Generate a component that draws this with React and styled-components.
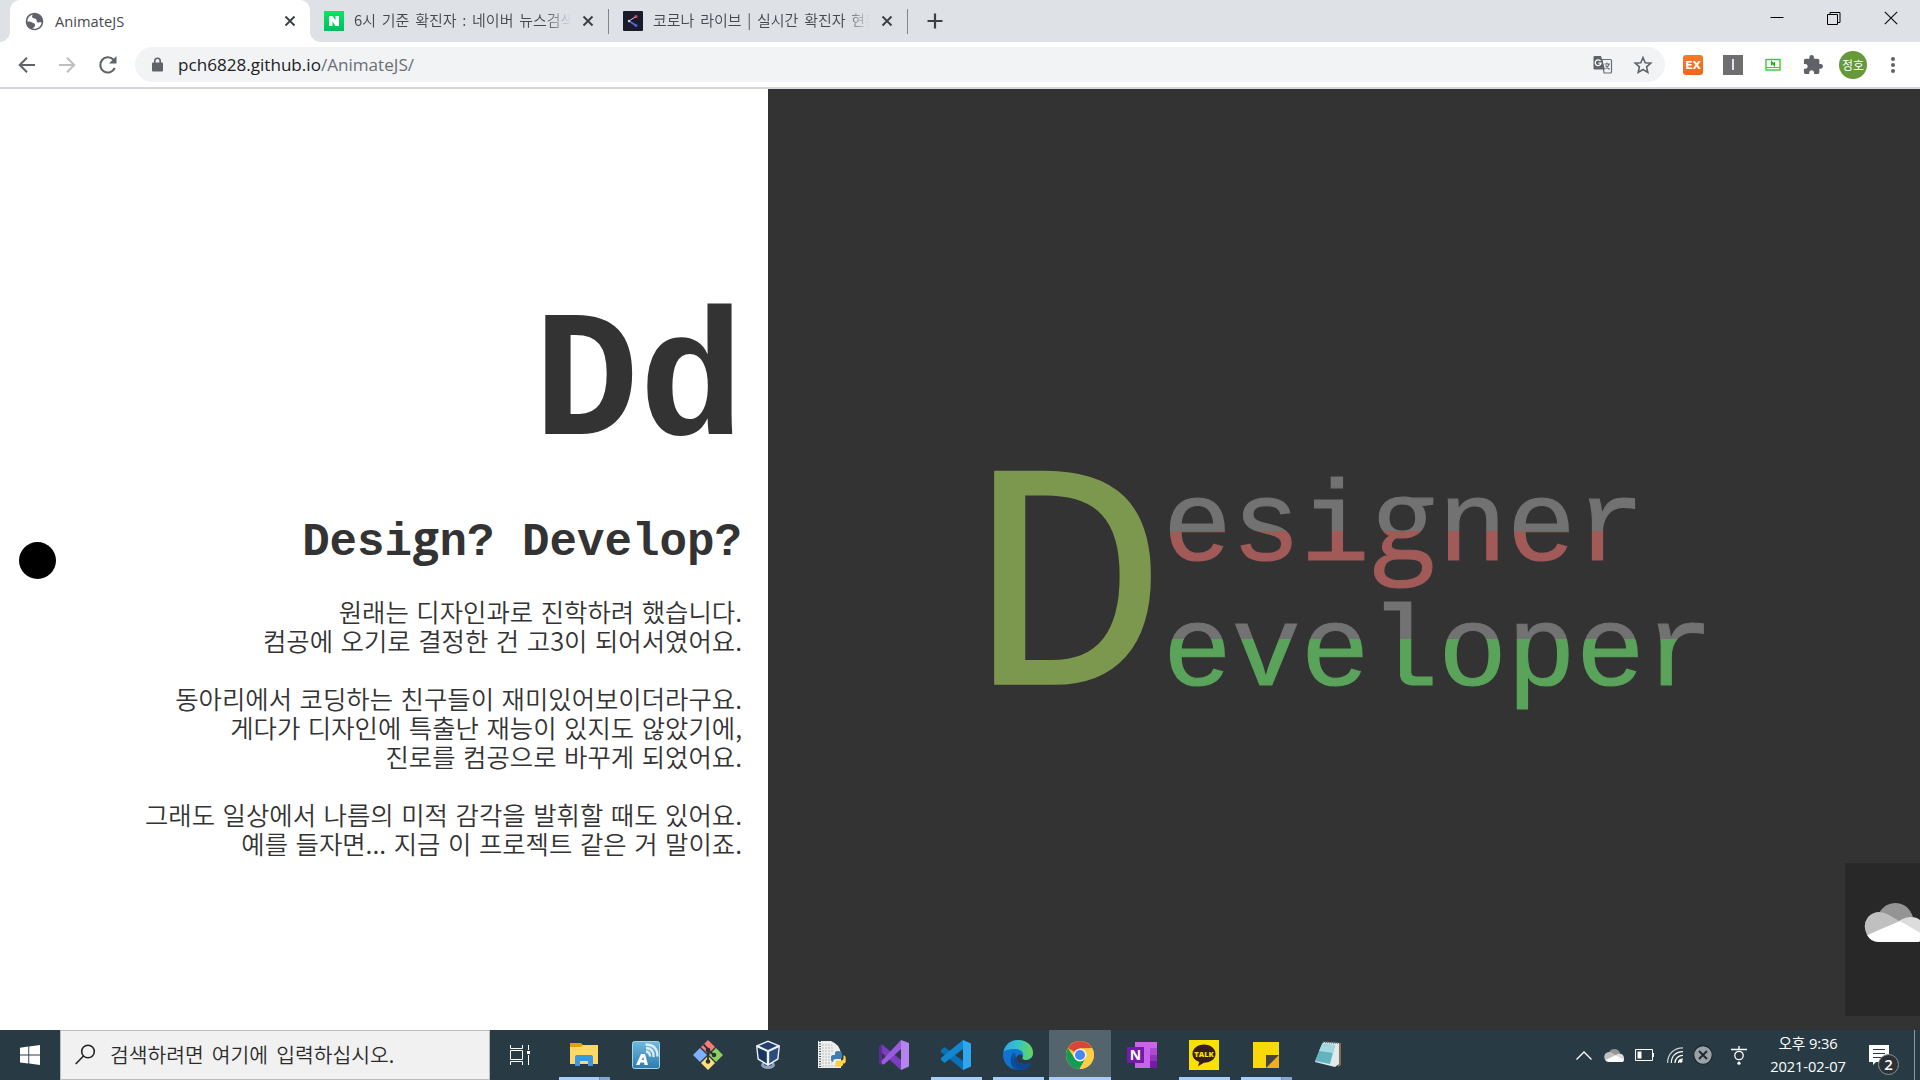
import React from "react";
import styled, { createGlobalStyle } from "styled-components";

const UI = `"Open Sans", "Noto Sans CJK KR", sans-serif`;
const KR = `"Noto Sans CJK KR", sans-serif`;
const MONO = `"Liberation Mono", "Noto Sans CJK KR", monospace`;

const Global = createGlobalStyle`
  * { box-sizing: border-box; }
  body { margin: 0; background: #fff; font-family: ${UI}; overflow: hidden; }
  svg { display: block; flex: none; }
`;

const Screen = styled.div`
  width: 1920px;
  height: 1080px;
  display: flex;
  flex-direction: column;
  overflow: hidden;
`;

/* ---------- browser frame ---------- */
const TabStrip = styled.div`
  height: 42px;
  flex: none;
  display: flex;
  background: #dee1e6;
  padding-left: 10px;
`;
const Tab = styled.div`
  position: relative;
  display: flex;
  align-items: center;
  width: ${(p) => p.$w}px;
  padding: 0 12px 0 14px;
  background: ${(p) => (p.$active ? "#fff" : "transparent")};
  border-radius: 10px 10px 0 0;
  &::before, &::after {
    content: "";
    display: ${(p) => (p.$active ? "block" : "none")};
    position: absolute;
    bottom: 0;
    width: 10px;
    height: 10px;
  }
  &::before { left: -10px; background: radial-gradient(circle at 0 0, transparent 9.5px, #fff 10px); }
  &::after { right: -10px; background: radial-gradient(circle at 100% 0, transparent 9.5px, #fff 10px); }
`;
const TabTitle = styled.div`
  flex: 1;
  margin: 0 ${(p) => (p.$kr ? 7 : 10)}px 0 10px;
  padding-bottom: ${(p) => (p.$kr ? 2 : 1)}px;
  font-family: ${(p) => (p.$kr ? KR : UI)};
  font-weight: ${(p) => (p.$kr ? 350 : 400)};
  font-size: ${(p) => (p.$kr ? 15 : 14.7)}px;
  word-spacing: ${(p) => (p.$kr ? 2.4 : 0)}px;
  line-height: 20px;
  color: #45494d;
  white-space: nowrap;
  overflow: hidden;
  mask-image: ${(p) => (p.$kr ? "linear-gradient(90deg, #000 calc(100% - 28px), transparent calc(100% - 2px))" : "none")};
`;
const Divider = styled.div`
  width: 1px;
  height: 25px;
  margin-top: 9px;
  background: #80858a;
`;
const NewTab = styled.div`
  display: flex;
  align-items: center;
  padding-left: 19px;
  flex: 1;
`;
const WindowButtons = styled.div`
  display: flex;
  gap: 43px;
  padding: 11px 22px 0 0;
`;
const NaverIcon = styled.div`
  width: 20px;
  height: 20px;
  display: grid;
  place-items: center;
  background: linear-gradient(#04e765, #04bd5c);
`;
const LiveIcon = styled.div`
  width: 20px;
  height: 20px;
  background: #191b2b;
  border-radius: 1px;
`;
const Toolbar = styled.div`
  height: 47px;
  flex: none;
  display: flex;
  align-items: center;
  padding: 0 17px 0 17px;
  border-bottom: 2px solid #d5d7dc;
  background: #fff;
`;
const NavButtons = styled.div`
  display: flex;
  flex: none;
  gap: 20px;
  width: 118px;
`;
const Omnibox = styled.div`
  width: 1530px;
  flex: none;
  height: 35px;
  display: flex;
  align-items: center;
  padding: 0 12px 0 15px;
  border-radius: 18px;
  background: #f1f3f4;
`;
const Url = styled.div`
  flex: 1;
  padding-left: 13px;
  font-size: 17.1px;
  color: #6b6f74;
  b { font-weight: 400; color: #202124; }
`;
const StarSlot = styled.div`
  margin-left: 20px;
`;
const Extensions = styled.div`
  flex: 1;
  display: flex;
  align-items: center;
  padding-left: 18px;
  gap: 20px;
`;
const ExBadge = styled.div`
  width: 20px;
  height: 20px;
  border-radius: 3px;
  background: linear-gradient(#f07c28, #f4641c);
  color: #fff;
  font: 700 11px/21px "DejaVu Sans", sans-serif;
  text-align: center;
  letter-spacing: -0.3px;
`;
const GreyBadge = styled.div`
  width: 20px;
  height: 20px;
  display: grid;
  place-items: center;
  background: #6e6e6e;
  &::after { content: ""; width: 2px; height: 11px; background: #dfe3f3; }
`;
const Avatar = styled.div`
  width: 28px;
  height: 28px;
  flex: none;
  margin: 0 -4px;
  border-radius: 50%;
  background: #65993a;
  color: #fff;
  font: 400 12px/27px ${KR};
  text-align: center;
`;

/* ---------- page ---------- */
const Page = styled.main`
  flex: 1;
  display: flex;
  position: relative;
  background: #333;
`;
const Intro = styled.section`
  width: 768px;
  display: flex;
  flex-direction: column;
  align-items: flex-end;
  padding: 200px 26px 0 0;
  background: #fff;
  color: #333;
`;
const Ball = styled.div`
  position: absolute;
  left: 19px;
  top: 453px;
  width: 37px;
  height: 37px;
  border-radius: 50%;
  background: #000;
`;
const Monogram = styled.h1`
  margin: 0 -2px 0 0;
  font: 700 171px/200px ${MONO};
  transform: scale(1.025, 1.05);
  transform-origin: 100% 145px;
`;
const Heading = styled.h2`
  margin: 24px 0 0;
  font: 700 45.82px/60px ${MONO};
  white-space: pre;
`;
const Swash = styled.span`
  display: inline-block;
  width: 0.6em;
  line-height: 0.8;
  text-align: center;
  font-family: "Open Sans", sans-serif;
`;
const Story = styled.p`
  margin: 24px 0 0;
  font: 350 25.4px/29px ${KR};
  word-spacing: 1.9px;
  text-align: right;
  white-space: pre;
`;
const Hero = styled.section`
  flex: 1;
  display: flex;
  align-items: flex-start;
  padding: 352px 0 0 200px;
`;
const BigD = styled.div`
  width: 195px;
  margin-top: 16px;
  font: 400 330px/280px ${MONO};
  color: #7c984f;
  transform: scale(1.01, 0.985);
  transform-origin: 20px 219px;
`;
const Words = styled.div`
  display: flex;
  flex-direction: column;
  margin-top: 26px;
`;
const Word = styled.div`
  height: 125.4px;
  font: 400 114.7px/125.4px ${MONO};
  color: transparent;
  -webkit-text-stroke: 1.2px transparent;
  background: linear-gradient(#727272 ${(p) => p.$cut}px, ${(p) => p.$c} ${(p) => p.$cut}px);
  background-clip: text;
  -webkit-background-clip: text;
`;
const Popup = styled.aside`
  position: absolute;
  right: 0;
  top: 774px;
  width: 75px;
  height: 153px;
  overflow: hidden;
  padding: 40px 0 0 19px;
  background: #282828;
`;

/* ---------- taskbar ---------- */
const Taskbar = styled.footer`
  height: 50px;
  flex: none;
  display: flex;
  background: #283b45;
`;
const Start = styled.div`
  width: 60px;
  display: grid;
  place-items: center;
`;
const Search = styled.div`
  width: 430px;
  display: flex;
  align-items: center;
  gap: 14px;
  padding: 0 0 2px 14px;
  border: 1px solid #bcbcbc;
  background: #f1f1f1;
  color: #2b2b2b;
  font: 350 20.4px/28px ${KR};
  word-spacing: 3.5px;
`;
const TaskView = styled.div`
  width: 63px;
  display: flex;
  align-items: center;
  padding-left: 20px;
`;
const AppButton = styled.div`
  width: 62px;
  height: 50px;
  display: flex;
  flex-direction: column;
  align-items: center;
  justify-content: space-between;
  padding-top: 10px;
  background: ${(p) => (p.$on ? "#53646c" : "transparent")};
`;
const Running = styled.div`
  width: ${(p) => (p.$full ? 62 : 51)}px;
  height: 3px;
  background: ${(p) => (p.$stack ? "linear-gradient(90deg, #a9cdfb 40px, #5b7797 40px, #86a5cf 41px)" : "#a9cdfb")};
`;
const Tray = styled.div`
  margin-left: auto;
  display: flex;
  align-items: center;
  color: #fff;
`;
const TrayIcon = styled.div`
  width: ${(p) => p.$w}px;
  display: flex;
  justify-content: center;
`;
const Clock = styled.div`
  width: 100px;
  text-align: center;
  font: 400 14.7px/23px ${UI};
  letter-spacing: -0.1px;
`;
const Notice = styled.div`
  position: relative;
  width: 56px;
  height: 50px;
  padding: 15px 0 0 11px;
`;
const Count = styled.div`
  position: absolute;
  left: 20px;
  top: 24px;
  width: 21px;
  height: 21px;
  border: 1px solid #8b9296;
  border-radius: 50%;
  background: #2c3135;
  font: 600 15px/19px ${UI};
  text-align: center;
`;
const Edge = styled.div`
  width: 6px;
  height: 50px;
  border-left: 1px solid #8c989e;
`;

const Close = () => (
  <svg width="16" height="16" viewBox="0 0 16 16">
    <path d="M3.5 3.5l9 9M12.5 3.5l-9 9" stroke="#3c4043" strokeWidth="1.9" />
  </svg>
);

const Globe = () => (
  <svg width="21" height="21" viewBox="0 0 24 24" fill="#5f6368">
    <path d="M12 2C6.48 2 2 6.48 2 12s4.48 10 10 10 10-4.48 10-10S17.52 2 12 2zm0 18.2c-1 0-1.900-.2-2.800-.5 1.900-.6 3.300-1.700 3.500-3.500.1-1.500-.9-2.200-2.300-2.600-1.600-.4-2.600-1.500-4.100-1.500H3.800C3.900 8.300 6.600 5 10.100 4c-1.100 1.500-1.300 3.200.1 4 1.500.8 2.300.2 3.600 1.500 1.200 1.200.1 2.500 1.400 3.300 1.500.9 3-.2 4.900.2-.5 4.100-4 7.200-8.100 7.200z" />
  </svg>
);

const icons = {
  explorer: (
    <svg width="30" height="30" viewBox="0 0 30 30">
      <path d="M1 3h11l2 2v4H1z" fill="#e2a10c" />
      <path d="M1 7h11l2-2h15v19H1z" fill="#ffd667" />
      <path d="M6 26V17q0-2 2-2h14q2 0 2 2v9h-5v-5h-8v5z" fill="#3c97e0" />
    </svg>
  ),
  hotspot: (
    <svg width="30" height="30" viewBox="0 0 30 30">
      <defs><linearGradient id="hs" x2="0" y2="1"><stop stopColor="#6fb9dc" /><stop offset="1" stopColor="#2d7cae" /></linearGradient></defs>
      <rect x="1.500" y="1.500" width="27" height="27" rx="2" fill="url(#hs)" stroke="#a6d5ea" />
      <path d="M5 25l5-11h4l3 11h-3.500l-.5-2.500H9.500L8.500 25zM10.500 20H13l-.7-3z" fill="#fff" fillRule="evenodd" />
      <path d="M15 11.500q4 .5 4 5M15 8q8 .5 7.500 9M14.500 4.500q12 0 12 12" fill="none" stroke="#d9edf6" strokeWidth="2.300" />
    </svg>
  ),
  git: (
    <svg width="30" height="30" viewBox="0 0 30 30">
      <path d="M15 0l7 7-7 7-7-7z" fill="#f77b7b" />
      <path d="M23 8l7 7-7 7-7-7z" fill="#8bd15c" />
      <path d="M7 8l7 7-7 7-7-7z" fill="#7fb0fb" />
      <path d="M15 16l7 7-7 7-7-7z" fill="#ffe07c" />
      <path d="M10.500 4.500L15 9v12M15 10l6 5" fill="none" stroke="#2b3236" strokeWidth="1.800" />
      <circle cx="15" cy="10" r="2.300" fill="#2b3236" /><circle cx="21" cy="15" r="2.300" fill="#2b3236" /><circle cx="15" cy="21.500" r="2.300" fill="#2b3236" />
    </svg>
  ),
  vbox: (
    <svg width="32" height="30" viewBox="1 0 32 30">
      <ellipse cx="15" cy="25" rx="7" ry="4" fill="#8fa1bb" /><ellipse cx="15" cy="24" rx="4" ry="2" fill="#304b78" />
      <path d="M15 .5l12 5-1.500 14L15 26 4.500 19.500 3 5.500z" fill="#eef3f9" />
      <path d="M15 2l9 3.800-9 4.200-9-4.200z" fill="#24416f" />
      <path d="M4.500 7.500l9.300 4.300v11.700l-8-5z" fill="#1c355f" /><path d="M25.500 7.500l-9.300 4.300v11.700l8-5z" fill="#2c4c7d" />
    </svg>
  ),
  python: (
    <svg width="30" height="30" viewBox="0 0 30 30">
      <path d="M1 1h13q8 3 10 12v15H1z" fill="#eeeeec" />
      <path d="M3 1v27" stroke="#4f5759" strokeWidth="2" strokeDasharray="1 1.500" />
      <path d="M5 5h10M5 8h12M5 11h11M5 14h8M5 17h8M5 20h8M5 23h10M5 26h14" stroke="#b9bebe" strokeDasharray="2 1" />
      <path d="M14 17q0-2 2-2h2v-2q0-2 3-2t4 2v4q0 2-2 2h-4q-3 0-3 3-2 0-2-3z" fill="#3e7cb1" />
      <path d="M28.500 17q0-2-2-1.500v2.500q0 2-2 2.500h-4q-2 0-2 2v2q0 2 3 2.500t4.500-2v-1.500h1.500q2-1 1-6.500z" fill="#ffd241" />
    </svg>
  ),
  vs: (
    <svg width="30" height="30" viewBox="0 0 30 30">
      <path d="M0 7l3-2.500L22 20v10L3 13v7l6-5 3 3-9 6.500-3-2z" fill="#7a3dbf" />
      <path d="M0 7l3-1.500v19L0 22z" fill="#5d2b97" />
      <path d="M22 0v9L5 24.500 3 24l-.5-3z" fill="#9a5be0" />
      <path d="M22 0l8 3v23.500L22 30z" fill="#b583ee" />
    </svg>
  ),
  vscode: (
    <svg width="30" height="30" viewBox="0 0 30 30">
      <path d="M0 10l3.500-3L22 21v9L0 12z" fill="#0a70b8" />
      <path d="M0 20l3.500 3L22 9V0L0 18z" fill="#1287cf" />
      <path d="M22 0l8 3.500v23L22 30z" fill="#2fa7ef" />
    </svg>
  ),
  edge: (
    <svg width="30" height="30" viewBox="0 0 30 30">
      <defs><linearGradient id="ed" x1="0" x2="1"><stop stopColor="#2fa6e8" /><stop offset=".5" stopColor="#38c4c4" /><stop offset="1" stopColor="#67d651" /></linearGradient></defs>
      <circle cx="15" cy="15" r="15" fill="#1173cf" />
      <path d="M.5 12C2 4 8 0 15 0c9 0 15 6 15 12.500 0 6-5 8-8.500 7.500-3-.5-2.500-2-1.500-4 1-3-2-7-8-7-6 0-10 1-11.500 3z" fill="url(#ed)" />
      <path d="M12 12c-3 5-1 13 5 15.500 4 1.500 8 0 10.500-3C24 31 16 31 12 29.600 6 26 6 15 12 12z" fill="#0d4f9c" />
      <path d="M13 13c-2 5 2 11 9 11 3 0 5-.8 6-1.300.6 0 .6.600-.2 1.600-2 3-6 5.700-10.800 4.700C10 26.500 9.500 17 13 13z" fill="#0e468f" />
      <path d="M20 16.500c-1 1.500-1.500 3 1.500 3.500 4 .6 7-1 8.200-4 1 3 0 6-1.400 7-6 2.500-14 1-15.300-5 2-4 5-4.500 7-1.500z" fill="#283b45" />
    </svg>
  ),
  chrome: (
    <svg width="30" height="30" viewBox="0 0 30 30">
      <circle cx="15" cy="15" r="14" fill="#fcc934" />
      <path d="M15 15L2.900 8A14 14 0 0 1 27.100 8L15 8.500z" fill="#db4437" />
      <path d="M2.900 8A14 14 0 0 0 14.500 29l6-10.500L15 15 9.500 18.300z" fill="#129a57" />
      <path d="M15 8.500h12.300A14 14 0 0 1 14.500 29l6-10.500z" fill="#ffcd46" />
      <circle cx="15" cy="15" r="6.500" fill="#f4f4f4" /><circle cx="15" cy="15" r="5" fill="#4587f4" />
    </svg>
  ),
  onenote: (
    <svg width="30" height="30" viewBox="0 0 30 30">
      <path d="M8 2h22v26H8z" fill="#ca64ea" /><path d="M23 8h7v7h-7z" fill="#ae4bd5" /><path d="M23 15h7v6h-7z" fill="#9332bf" /><path d="M23 21h7v7h-7z" fill="#7719aa" />
      <path d="M8 2h15v26H8z" fill="#c765ea" /><path d="M0 7h17v16H0z" fill="#7719aa" />
      <text x="8.500" y="20" textAnchor="middle" fontFamily="Open Sans" fontWeight="700" fontSize="14" fill="#fff">N</text>
    </svg>
  ),
  talk: (
    <svg width="30" height="30" viewBox="0 0 30 30">
      <path d="M0 0h30v30H0z" fill="#fae100" />
      <path d="M15 4.500c6.500 0 11.500 4 11.500 9.200s-5 9-11.500 9l-6 3.500 1.300-4.300C6 20.500 3.500 17.500 3.500 13.700c0-5.200 5-9.200 11.500-9.200z" fill="#371d1e" />
      <text x="15" y="16.600" textAnchor="middle" fontFamily="Open Sans" fontWeight="800" fontSize="7.500" fill="#fae100">TALK</text>
    </svg>
  ),
  sticky: (
    <svg width="30" height="30" viewBox="0 0 30 30">
      <path d="M2 2h26v26H2z" fill="#fbd80a" /><path d="M28 15v13H15z" fill="#f0ae18" /><path d="M15 15h13L15 28z" fill="#45423f" />
    </svg>
  ),
  notepad: (
    <svg width="30" height="30" viewBox="0 0 30 30">
      <path d="M25 3h3v22l-3 2z" fill="#8a6e4b" /><path d="M10 2l16 1v21l-4 3-20-5z" fill="#dfeaec" />
      <path d="M9 4l13 1-5 19-15-3z" fill="#64b3c0" /><path d="M9 4l13 1-2 8-14-2z" fill="#a3d9df" />
      <path d="M10 2l15 1" stroke="#667" strokeWidth="2" strokeDasharray="1 1" />
    </svg>
  ),
};

const apps = [
  { id: "explorer", run: true, stack: true },
  { id: "hotspot" },
  { id: "git" },
  { id: "vbox" },
  { id: "python" },
  { id: "vs" },
  { id: "vscode", run: true },
  { id: "edge", run: true },
  { id: "chrome", run: true, on: true },
  { id: "onenote" },
  { id: "talk", run: true },
  { id: "sticky", run: true, stack: true },
  { id: "notepad" },
];

const story = `원래는 디자인과로 진학하려 했습니다.
컴공에 오기로 결정한 건 고3이 되어서였어요.

동아리에서 코딩하는 친구들이 재미있어보이더라구요.
게다가 디자인에 특출난 재능이 있지도 않았기에,
진로를 컴공으로 바꾸게 되었어요.

그래도 일상에서 나름의 미적 감각을 발휘할 때도 있어요.
예를 들자면... 지금 이 프로젝트 같은 거 말이죠.`;

function BrowserFrame() {
  return (
    <>
      <TabStrip>
        <Tab $active $w={300}>
          <Globe />
          <TabTitle>AnimateJS</TabTitle>
          <Close />
        </Tab>
        <Tab $w={298}>
          <NaverIcon>
            <svg width="10" height="10" viewBox="0 0 10 10"><path d="M0 0h3.500l3 4.500V0H10v10H6.500l-3-4.500V10H0z" fill="#fff" /></svg>
          </NaverIcon>
          <TabTitle $kr>6시 기준 확진자 : 네이버 뉴스검색</TabTitle>
          <Close />
        </Tab>
        <Divider />
        <Tab $w={298}>
          <LiveIcon>
            <svg width="20" height="20" viewBox="0 0 20 20">
              <path d="M13 5.500L6 10" stroke="#d8c4cf" /><path d="M6 10l7 4.500" stroke="#5b6ad8" strokeWidth="1.500" />
              <circle cx="13" cy="5.500" r="1.500" fill="#d64b62" /><circle cx="6" cy="10" r="1.200" fill="#cfd4ee" /><circle cx="13" cy="14.500" r="1.500" fill="#4a5be0" />
            </svg>
          </LiveIcon>
          <TabTitle $kr>코로나 라이브 | 실시간 확진자 현황</TabTitle>
          <Close />
        </Tab>
        <Divider />
        <NewTab>
          <svg width="16" height="16" viewBox="0 0 16 16"><path d="M8 .5v15M.5 8h15" stroke="#3c4043" strokeWidth="2.200" /></svg>
        </NewTab>
        <WindowButtons>
          <svg width="14" height="14" viewBox="0 0 14 14"><path d="M.5 6.500h13" stroke="#000" /></svg>
          <svg width="14" height="14" viewBox="0 0 14 14" fill="none" stroke="#000"><path d="M.5 3.500h10v10H.5zM3 3V1.500h10v10h-2" /></svg>
          <svg width="14" height="14" viewBox="0 0 14 14"><path d="M.8 .8l12.400 12.400M13.200 .8L.8 13.200" stroke="#111" strokeWidth="1.200" /></svg>
        </WindowButtons>
      </TabStrip>
      <Toolbar>
        <NavButtons>
          <svg width="20" height="20" viewBox="0 0 20 20" fill="none" stroke="#5f6368" strokeWidth="2"><path d="M18 10H3.500M10 2.700L2.700 10l7.300 7.300" /></svg>
          <svg width="20" height="20" viewBox="0 0 20 20" fill="none" stroke="#bdbfc2" strokeWidth="2"><path d="M2 10h14.500M10 2.700L17.300 10 10 17.300" /></svg>
          <svg width="22" height="20" viewBox="0 0 22 20"><path d="M17.800 13A7.600 7.600 0 1 1 16.500 4.800" fill="none" stroke="#5f6368" strokeWidth="2.100" /><path d="M19.500 1v7.500H12z" fill="#5f6368" /></svg>
        </NavButtons>
        <Omnibox>
          <svg width="15" height="15" viewBox="0 0 15 15"><rect x="2" y="5.500" width="11" height="9" rx="1" fill="#5f6368" /><path d="M4.800 6V4a2.700 2.700 0 0 1 5.400 0v2" fill="none" stroke="#5f6368" strokeWidth="1.600" /></svg>
          <Url><b>pch6828.github.io</b>/AnimateJS/</Url>
          <svg width="20" height="20" viewBox="0 0 20 20">
            <path d="M9 4.500h8.500q1 0 1 1v11.500q0 1-1 1H11z" fill="#f1f3f4" stroke="#6b6f74" strokeWidth="1.200" />
            <path d="M1.500 1H8l4 13.500H1.500q-1 0-1-1V2q0-1 1-1z" fill="#5f6368" />
            <path d="M7.500 6A2.900 2.900 0 1 0 8 8.200H5.500" fill="none" stroke="#fff" strokeWidth="1.300" />
            <path d="M11.500 9H17M14 7.500V9M16 9q-1 3.500-3.500 5M12.500 10.500l4 4" fill="none" stroke="#6b6f74" strokeWidth="1.100" />
          </svg>
          <StarSlot>
            <svg width="20" height="20" viewBox="0 0 20 20"><path d="M10 2.500l2.200 5.200 5.600.5-4.200 3.700 1.200 5.500-4.800-2.900-4.800 2.900 1.200-5.500-4.200-3.700 5.600-.5z" fill="none" stroke="#5f6368" strokeWidth="1.600" /></svg>
          </StarSlot>
        </Omnibox>
        <Extensions>
          <ExBadge>EX</ExBadge>
          <GreyBadge />
          <svg width="20" height="20" viewBox="0 0 20 20"><rect x="3" y="4.500" width="14" height="10.500" fill="#fff" stroke="#2fd12b" strokeWidth="1.400" /><path d="M3 12.500h14" stroke="#2fd12b" /><path d="M8.700 10.500V7l2.600 3.200V7" fill="none" stroke="#1fb51f" strokeWidth="1.400" /></svg>
          <svg width="20" height="20" viewBox="1 1 22 22"><path d="M20.500 11H19V7c0-1.100-.9-2-2-2h-4V3.500a2.500 2.500 0 0 0-5 0V5H4c-1.100 0-1.990.9-1.990 2v3.800H3.500c1.490 0 2.700 1.210 2.700 2.700s-1.210 2.700-2.700 2.700H2V20c0 1.100.9 2 2 2h3.800v-1.500c0-1.490 1.210-2.700 2.700-2.700s2.700 1.210 2.700 2.700V22H17c1.100 0 2-.9 2-2v-4h1.500a2.500 2.500 0 0 0 0-5z" fill="#5f6368" /></svg>
          <Avatar>정호</Avatar>
          <svg width="20" height="20" viewBox="0 0 20 20" fill="#5f6368"><circle cx="10" cy="4" r="2" /><circle cx="10" cy="10" r="2" /><circle cx="10" cy="16" r="2" /></svg>
        </Extensions>
      </Toolbar>
    </>
  );
}

const CloudArt = ({ w }) => (
  <svg width={w} height={w * 0.65} viewBox="0 0 60 39">
    <path d="M15 10Q21 0 31 0q13 0 18 14L35 20z" fill="#949494" />
    <path d="M3 32Q-2 22 4 14 13 5 25 12l12 7z" fill="#c0c0c0" />
    <path d="M35 18q6-4 12-4 12 0 13 13v7z" fill="#dcdcdc" />
    <path d="M3 32l33-14 24 14q0 7-8 7H14Q7 39 3 32z" fill="#fff" />
  </svg>
);

export default function App() {
  return (
    <Screen>
      <Global />
      <BrowserFrame />
      <Page>
        <Intro>
          <Monogram>Dd</Monogram>
          <Heading>Desi<Swash>g</Swash>n? Develop?</Heading>
          <Story>{story}</Story>
        </Intro>
        <Hero>
          <BigD>D</BigD>
          <Words>
            <Word $cut={64} $c="#a15a58">esi<Swash>g</Swash>ner</Word>
            <Word $cut={47} $c="#59a35a">eveloper</Word>
          </Words>
        </Hero>
        <Ball />
        <Popup><CloudArt w={60} /></Popup>
      </Page>
      <Taskbar>
        <Start>
          <svg width="20" height="20" viewBox="0 0 20 20" fill="#fff"><path d="M0 2.700l8.300-1.100v8H0zM9.200 1.400L20 0v9.600H9.200zM0 10.500h8.300v8L0 17.400zM9.200 10.500H20V20L9.200 18.600z" /></svg>
        </Start>
        <Search>
          <svg width="21" height="21" viewBox="0 0 21 21" fill="none" stroke="#222" strokeWidth="1.600"><circle cx="13" cy="7.500" r="6.300" /><path d="M8.500 12L.7 20" /></svg>
          검색하려면 여기에 입력하십시오.
        </Search>
        <TaskView>
          <svg width="20" height="20" viewBox="0 0 20 20" fill="none" stroke="#fff"><path d="M.5 0v3.500h12V0M.5 5.500h12v9H.5zM.5 20v-3.500h12V20M18.500 0v5M18.500 10v10" /><path d="M17 6h3v3h-3z" fill="#fff" stroke="none" /></svg>
        </TaskView>
        {apps.map((a) => (
          <AppButton key={a.id} $on={a.on}>
            {icons[a.id]}
            {a.run && <Running $full={a.on} $stack={a.stack} />}
          </AppButton>
        ))}
        <Tray>
          <TrayIcon $w={34}><svg width="16" height="9" viewBox="0 0 16 9"><path d="M.5 8.500L8 1l7.500 7.500" fill="none" stroke="#fff" strokeWidth="1.300" /></svg></TrayIcon>
          <TrayIcon $w={26}><CloudArt w={20} /></TrayIcon>
          <TrayIcon $w={35}><svg width="19" height="12" viewBox="0 0 19 12"><path d="M.5 .5h17v11H.5z" fill="none" stroke="#fff" /><path d="M2.500 2.500h4v7h-4zM18 4h1v4h-1z" fill="#fff" /></svg></TrayIcon>
          <TrayIcon $w={25}><svg width="16" height="16" viewBox="0 0 16 16" fill="none" stroke="#fff" strokeWidth="1.200"><path d="M.6 16C.6 7 7 .8 16 .8" opacity=".75" /><path d="M4.300 16C4.300 9 9 4.600 16 4.600M8 16c0-4.500 3.500-7.600 8-7.600M11.500 16q0-4 4.500-4" /><circle cx="13.800" cy="14" r="1.800" fill="#fff" stroke="none" /></svg></TrayIcon>
          <TrayIcon $w={32}><svg width="20" height="20" viewBox="0 0 20 20"><circle cx="10" cy="10" r="9.300" fill="#9aa2a8" stroke="#1b262c" strokeWidth="1.200" /><path d="M6 6l8 8M14 6l-8 8" stroke="#202b31" strokeWidth="2" /></svg></TrayIcon>
          <TrayIcon $w={39}><svg width="16" height="19" viewBox="0 0 16 19" fill="none" stroke="#fff" strokeWidth="1.300"><path d="M8 0v3M0 3.500h16" /><circle cx="8" cy="9.500" r="4.200" /><circle cx="8" cy="17.200" r="1.600" fill="#fff" stroke="none" /></svg></TrayIcon>
          <Clock>오후 9:36<br />2021-02-07</Clock>
          <Notice>
            <svg width="20" height="20" viewBox="0 0 20 20"><path d="M0 0h20v17H7l-3 3v-3H0z" fill="#fff" /><path d="M4 4.500h12M4 8.500h12M4 12.500h12" stroke="#283b45" /></svg>
            <Count>2</Count>
          </Notice>
          <Edge />
        </Tray>
      </Taskbar>
    </Screen>
  );
}
